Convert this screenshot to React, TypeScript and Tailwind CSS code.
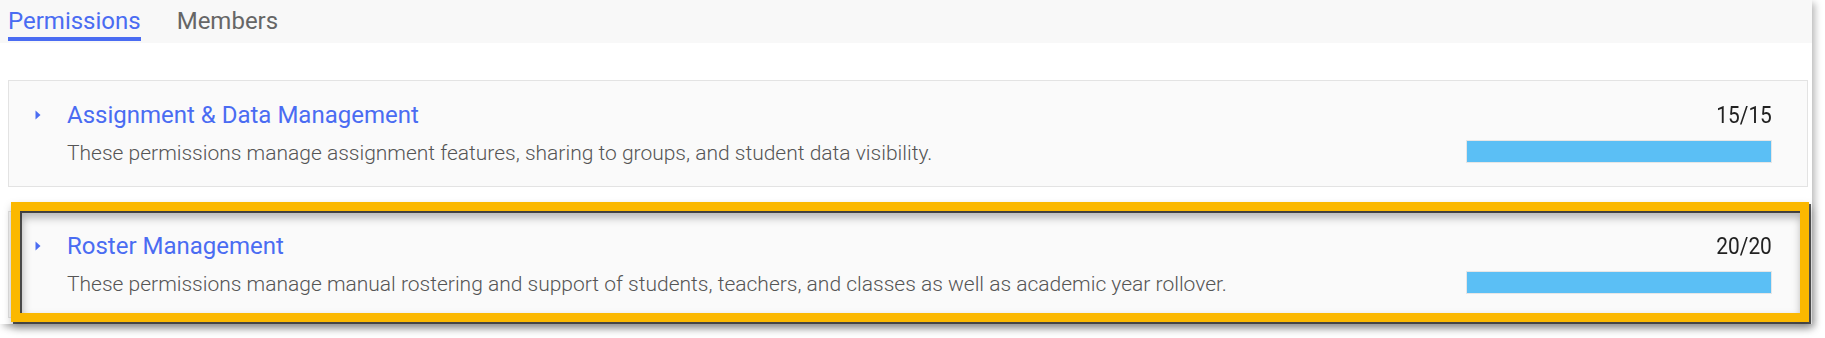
import React from "react";

const Caret = () => (
  <svg width="6" height="10" viewBox="0 0 6 10" className="block">
    <path d="M0.5 0.5 L5.5 5 L0.5 9.5 Z" fill="#4a6cf2" />
  </svg>
);

type Row = { title: string; desc: string; count: string };

const rows: Row[] = [
  {
    title: "Assignment & Data Management",
    desc: "These permissions manage assignment features, sharing to groups, and student data visibility.",
    count: "15/15",
  },
  {
    title: "Roster Management",
    desc: "These permissions manage manual rostering and support of students, teachers, and classes as well as academic year rollover.",
    count: "20/20",
  },
];

function Card({ row }: { row: Row }) {
  return (
    <div className="flex h-[107px] w-[1800px] border border-[#e3e3e3] bg-[#fafafa] pl-[26px] pr-[35px] pt-[18px]">
      <div className="flex h-[32px] w-[32px] items-center">
        <Caret />
      </div>
      <div className="flex flex-1 flex-col">
        <div className="text-[24px] leading-[32px] text-[#4a6cf2]">{row.title}</div>
        <div className="mt-[8px] text-[21px] font-light leading-[28px] text-[#555555]">{row.desc}</div>
      </div>
      <div className="flex w-[306px] flex-col items-end">
        <div className="h-[32px] text-[24px] leading-[32px] text-[#222222]">
          <span className="inline-block origin-right scale-x-[0.87]">{row.count}</span>
        </div>
        <div className="mt-[9px] h-[23px] w-[306px] border border-[#e6e6e6] bg-[#5bbff5]" />
      </div>
    </div>
  );
}

export default function App() {
  return (
    <div className="h-[338px] w-[1825px] bg-white" style={{ fontFamily: "Roboto, 'Noto Sans', sans-serif" }}>
      <div className="relative h-[324px] w-[1812px] bg-white shadow-[3px_3px_7px_rgba(0,0,0,0.28)]">
        <div className="flex h-[43px] gap-[36px] bg-[#f8f8f8] pl-[8px] pt-[5px]">
          <div className="h-[36px] border-b-[4px] border-[#4a6cf2] text-[24px] leading-[32px] text-[#4a6cf2]">
            Permissions
          </div>
          <div className="text-[24px] leading-[32px] text-[#666666]">Members</div>
        </div>
        <div className="flex flex-col gap-[24px] pl-[8px] pt-[37px]">
          {rows.map((r) => (
            <Card key={r.title} row={r} />
          ))}
        </div>
        <div className="absolute left-[11px] top-[202px] h-[120px] w-[1798px] border-[9px] border-[#fbb800] [filter:drop-shadow(2px_2px_0.5px_rgba(0,0,0,0.65))_drop-shadow(1px_5px_4px_rgba(0,0,0,0.3))]" />
      </div>
    </div>
  );
}
